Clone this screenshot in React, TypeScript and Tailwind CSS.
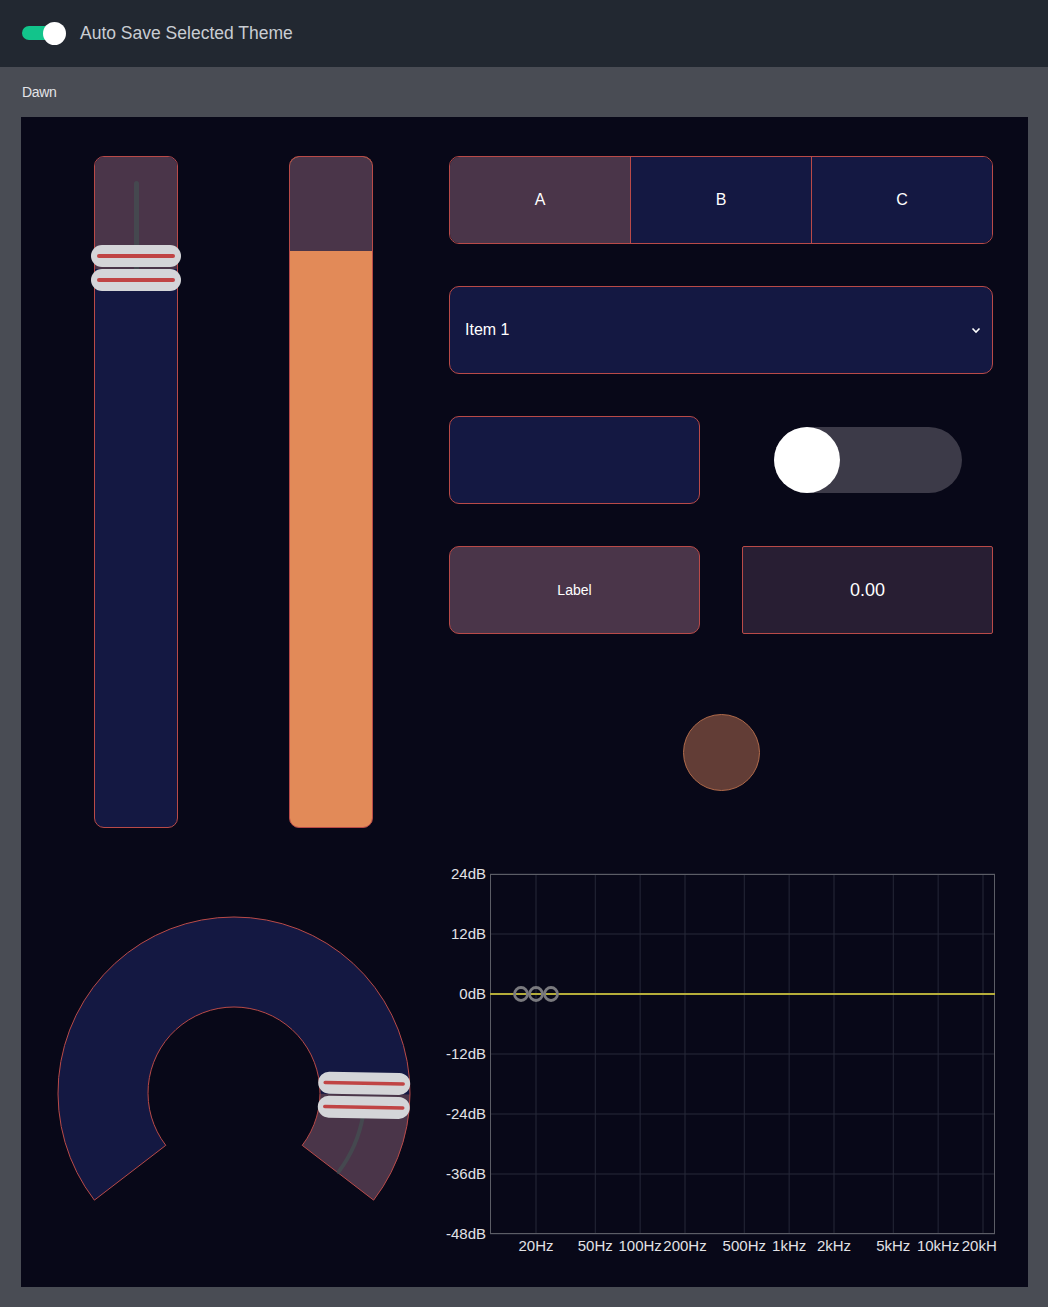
import React from "react";

const FONT = "font-['Liberation_Sans',Arial,sans-serif]";

// point sur l'arc (angles en degres, sens horaire, y vers le bas)
function pt(cx: number, cy: number, r: number, deg: number) {
  const a = (deg * Math.PI) / 180;
  return [cx + r * Math.cos(a), cy + r * Math.sin(a)];
}

function ringPath(cx: number, cy: number, R: number, r: number, a0: number, a1: number) {
  const large = a1 - a0 > 180 ? 1 : 0;
  const [ox0, oy0] = pt(cx, cy, R, a0);
  const [ox1, oy1] = pt(cx, cy, R, a1);
  const [ix1, iy1] = pt(cx, cy, r, a1);
  const [ix0, iy0] = pt(cx, cy, r, a0);
  return `M${ox0} ${oy0} A${R} ${R} 0 ${large} 1 ${ox1} ${oy1} L${ix1} ${iy1} A${r} ${r} 0 ${large} 0 ${ix0} ${iy0} Z`;
}

function Thumb() {
  return (
    <>
      <div className="absolute left-0 top-0 h-[22px] w-[90px] rounded-[11px] bg-[#d4d5d8] flex items-center justify-center">
        <div className="h-[4px] w-[78px] rounded-full bg-[#c04444]"></div>
      </div>
      <div className="absolute left-0 top-[24px] h-[22px] w-[90px] rounded-[11px] bg-[#d4d5d8] flex items-center justify-center">
        <div className="h-[4px] w-[78px] rounded-full bg-[#c04444]"></div>
      </div>
    </>
  );
}

function ArcKnob() {
  const cx = 213;
  const cy = 265;
  const R = 176;
  const r = 86;
  const track = ringPath(cx, cy, R, r, 142.5, 397.5);
  const value = ringPath(cx, cy, R, r, 360.5, 397.5);
  const [sx0, sy0] = pt(cx, cy, 131, 10);
  const [sx1, sy1] = pt(cx, cy, 131, 37);
  const [tx, ty] = pt(cx, cy, 130, 1);
  return (
    <svg width="409" height="459" viewBox="0 0 409 459">
      <path d={track} fill="#141842" />
      <path d={value} fill="#4a3549" />
      <path d={track} fill="none" stroke="#b94a48" strokeWidth="1" />
      <path d={`M${sx0} ${sy0} A131 131 0 0 1 ${sx1} ${sy1}`} fill="none" stroke="#45484f" strokeWidth="4" strokeLinecap="round" />
      <g transform={`translate(${tx} ${ty}) rotate(1)`}>
        <rect x="-46" y="-23" width="92" height="22" rx="11" fill="#d4d5d8" />
        <line x1="-39" y1="-12" x2="39" y2="-12" stroke="#c04444" strokeWidth="3.5" strokeLinecap="round" />
        <rect x="-46" y="1" width="92" height="22" rx="11" fill="#d4d5d8" />
        <line x1="-39" y1="12" x2="39" y2="12" stroke="#c04444" strokeWidth="3.5" strokeLinecap="round" />
      </g>
    </svg>
  );
}

function EqChart() {
  const dbs = ["24dB", "12dB", "0dB", "-12dB", "-24dB", "-36dB", "-48dB"];
  const freqs: [number, string][] = [
    [20, "20Hz"], [50, "50Hz"], [100, "100Hz"], [200, "200Hz"], [500, "500Hz"],
    [1000, "1kHz"], [2000, "2kHz"], [5000, "5kHz"], [10000, "10kHz"], [20000, "20kHz"],
  ];
  const fx = (f: number) => 106 + 149 * Math.log10(f / 20);
  return (
    <svg width="567" height="459" viewBox="0 0 567 459" className="overflow-hidden" style={{ fontFamily: "'Liberation Sans', Arial, sans-serif" }}>
      {dbs.map((d, i) => (
        <line key={d} x1="60" x2="565" y1={46 + i * 60} y2={46 + i * 60} stroke="#262838" strokeWidth="1" />
      ))}
      {freqs.map(([f]) => (
        <line key={f} x1={fx(f)} x2={fx(f)} y1="46" y2="406" stroke="#262838" strokeWidth="1" />
      ))}
      <rect x="60.5" y="46.5" width="504" height="359" fill="none" stroke="#5c5d66" strokeWidth="1" />
      {dbs.map((d, i) => (
        <text key={d} x="56" y={46 + i * 60 + 5} textAnchor="end" fontSize="15" fill="#e2e2e6">
          {d}
        </text>
      ))}
      {freqs.map(([f, l]) => (
        <text key={l} x={fx(f)} y="423" textAnchor="middle" fontSize="15" fill="#e2e2e6">
          {l}
        </text>
      ))}
      <line x1="60" x2="565" y1="166" y2="166" stroke="#b5ad3a" strokeWidth="2" />
      {[91, 106, 121].map((x) => (
        <circle key={x} cx={x} cy="166" r="6.5" fill="none" stroke="#7a7a7e" strokeWidth="2.8" />
      ))}
    </svg>
  );
}

export default function App() {
  return (
    <div className={`min-h-[1307px] w-[1048px] bg-[#494c54] ${FONT}`}>
      {/* barre du haut */}
      <div className="h-[67px] bg-[#222831] flex items-center px-[22px]">
        <div className="relative w-[44px] h-[23px]">
          <div className="absolute left-0 top-[4px] h-[14px] w-[40px] rounded-full bg-[#12c48b]"></div>
          <div className="absolute right-0 top-0 h-[23px] w-[23px] rounded-full bg-white"></div>
        </div>
        <span className="ml-[14px] text-[17.5px] text-[#c9cdd3]">Auto Save Selected Theme</span>
      </div>

      <div className="h-[50px] flex items-center px-[22px] text-[14px] tracking-[-0.3px] text-[#e4e4e8]">Dawn</div>

      {/* panneau des controles */}
      <div className="ml-[21px] w-[1007px] h-[1170px] bg-[#080818] flex flex-col">
        <div className="flex pt-[39px] h-[711px]">
          <div className="w-[428px] flex pl-[73px] gap-[111px]">
            {/* slider vertical 1 */}
            <div className="relative w-[84px] h-[672px]">
              <div className="w-full h-full rounded-[10px] border border-[#b94a48] overflow-hidden bg-[#141842] relative">
                <div className="h-[112px] bg-[#4a3549]"></div>
                <div className="absolute left-[39px] top-[24px] w-[5px] h-[90px] rounded-full bg-[#45484f]"></div>
              </div>
              <div className="absolute left-[-3px] top-[89px] w-[90px] h-[46px]">
                <Thumb />
              </div>
            </div>
            {/* slider vertical 2 */}
            <div className="w-[84px] h-[672px] rounded-[10px] border border-[#b94a48] overflow-hidden bg-[#e28a58]">
              <div className="h-[94px] bg-[#4a3549]"></div>
            </div>
          </div>

          <div className="w-[544px] flex flex-col">
            <div className="h-[88px] flex rounded-[10px] border border-[#b94a48] overflow-hidden text-[16px] text-white">
              <div className="flex-1 flex items-center justify-center bg-[#4a3549]">A</div>
              <div className="flex-1 flex items-center justify-center bg-[#141842] border-l border-[#b94a48]">B</div>
              <div className="flex-1 flex items-center justify-center bg-[#141842] border-l border-[#b94a48]">C</div>
            </div>

            <div className="mt-[42px] h-[88px] flex items-center justify-between rounded-[10px] border border-[#b94a48] bg-[#141842] pl-[15px] pr-[11px] text-[16px] text-white">
              <span>Item 1</span>
              <svg width="10" height="7" viewBox="0 0 10 7">
                <polyline points="1.5,1.5 5,5 8.5,1.5" fill="none" stroke="white" strokeWidth="1.6" />
              </svg>
            </div>

            <div className="mt-[42px] h-[88px] grid grid-cols-2 gap-[42px]">
              <div className="rounded-[10px] border border-[#b94a48] bg-[#141842]"></div>
              <div className="flex items-center justify-center">
                <div className="w-[188px] h-[66px] rounded-full bg-[#3c3a48] flex">
                  <div className="w-[66px] h-[66px] rounded-full bg-white"></div>
                </div>
              </div>
            </div>

            <div className="mt-[42px] h-[88px] grid grid-cols-2 gap-[42px]">
              <div className="rounded-[10px] border border-[#b94a48] bg-[#4a3549] flex items-center justify-center text-[14px] text-white">
                Label
              </div>
              <div className="rounded-[2px] border border-[#b94a48] bg-[#281e33] flex items-center justify-center text-[18px] text-white">
                0.00
              </div>
            </div>

            <div className="mt-[80px] flex justify-center">
              <div className="w-[77px] h-[77px] rounded-full bg-[#623d36] border border-[#b06a4a]"></div>
            </div>
          </div>
        </div>

        <div className="flex h-[459px]">
          <ArcKnob />
          <EqChart />
        </div>
      </div>
    </div>
  );
}
